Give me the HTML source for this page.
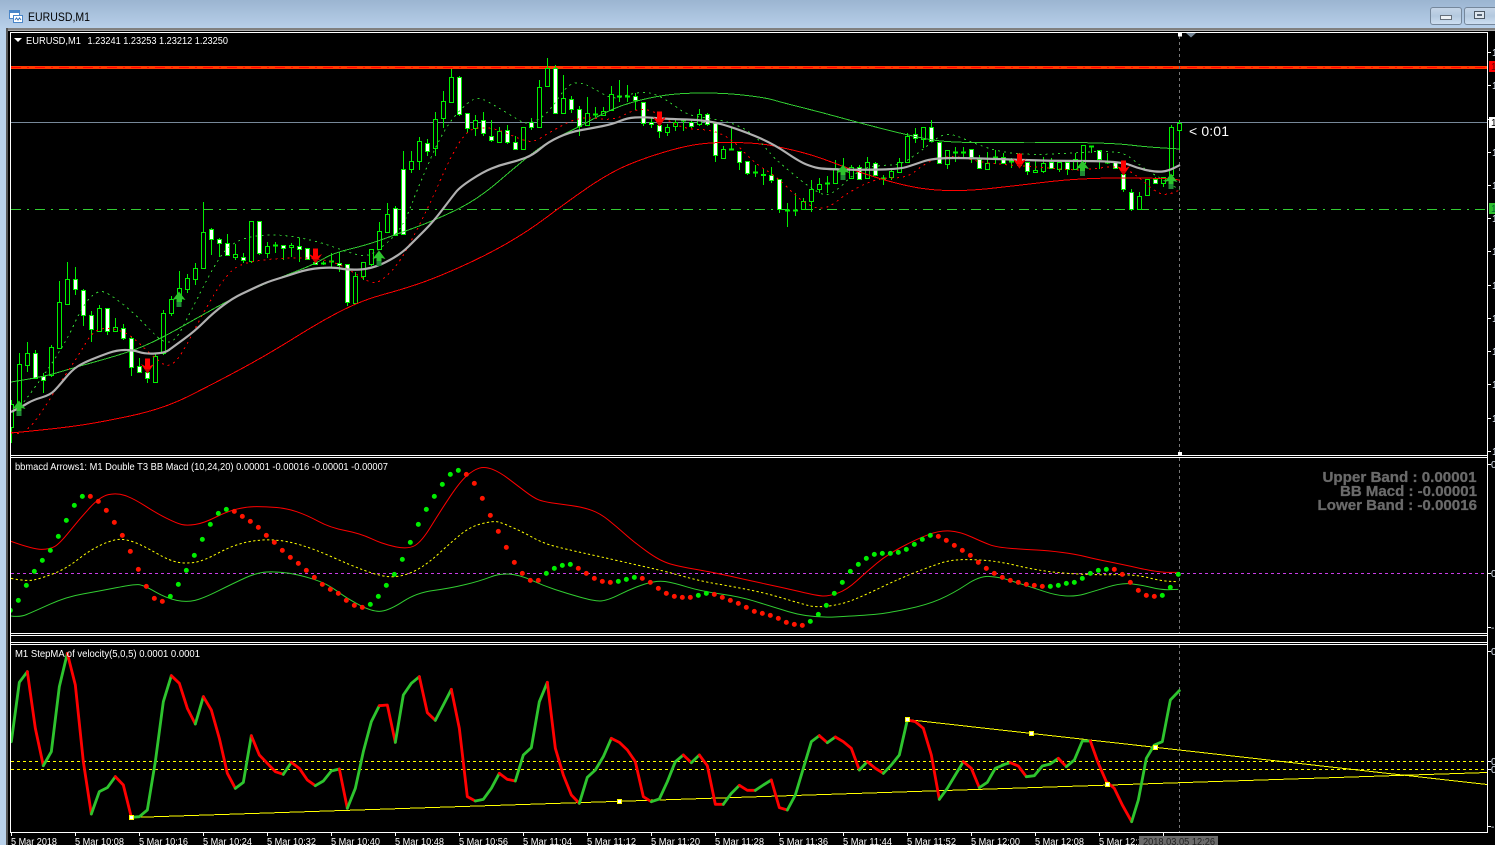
<!DOCTYPE html>
<html><head><meta charset="utf-8"><title>EURUSD,M1</title>
<style>
html,body{margin:0;padding:0;background:#b9d1ea;width:1495px;height:845px;overflow:hidden}
svg{display:block;font-family:"Liberation Sans",sans-serif}
.c{shape-rendering:crispEdges}
.l{fill:none;shape-rendering:crispEdges}
.t{fill:#fff;font-size:10px}
.x{fill:#fff;font-size:10px}
.a{fill:#dfe8f5;font-size:10px}
.gn{fill:none;stroke:#2ec42e;stroke-width:8.5;stroke-linejoin:round;stroke-linecap:round}
.rd{fill:none;stroke:#f00;stroke-width:8.5;stroke-linejoin:round;stroke-linecap:round}
.bd{fill:#6a6a6a;stroke:#6a6a6a;stroke-width:.3;font-size:15px;font-weight:bold}
</style></head><body>
<svg width="1495" height="845" viewBox="0 0 1495 845" xmlns="http://www.w3.org/2000/svg">
<defs>
<linearGradient id="tb" x1="0" y1="0" x2="0" y2="1"><stop offset="0" stop-color="#9bb5d1"/><stop offset="1" stop-color="#b8d0ea"/></linearGradient>
<linearGradient id="bt" x1="0" y1="0" x2="0" y2="1"><stop offset="0" stop-color="#c6d6e8"/><stop offset=".5" stop-color="#b4c9df"/><stop offset="1" stop-color="#cfe0f2"/></linearGradient>
<clipPath id="m"><rect x="11" y="33" width="1476" height="422"/></clipPath>
<clipPath id="s2"><rect x="11" y="458" width="1476" height="175"/></clipPath>
<clipPath id="s3"><rect x="11" y="645" width="1476" height="187"/></clipPath>
<g id="up"><path d="M0-7.500L6.500 1L2.500 0V8H-2.500V0L-6.500 1Z" fill="#2ec42e"/><path d="M-2.500 3H2.500V8H-2.500Z" fill="#1f8a35"/></g>
<g id="dn"><path d="M-2.500-7.500H2.500V0L6.500-2L0 7.500L-6.500-2L-2.500 0Z" fill="#f00"/><path d="M-3 3L0 7.500L3 3Z" fill="#d00000"/></g>
</defs>

<rect x="0" y="0" width="1495" height="845" fill="#b9d1ea"/>
<rect x="0" y="0" width="1495" height="29" fill="url(#tb)"/>
<!-- title icon -->
<rect x="9.500" y="10.500" width="10" height="8" fill="#fff" stroke="#4a86c8"/>
<rect x="10" y="11" width="9" height="2" fill="#4a86c8"/>
<rect x="13.500" y="15.500" width="9" height="7" fill="#fff" stroke="#4a86c8"/>
<path d="M15 20l1.500-2 1.500 2 1.500-2 1.500 2" fill="none" stroke="#3a74b8"/>
<text x="28" y="21" font-size="12" fill="#000" textLength="62" lengthAdjust="spacingAndGlyphs">EURUSD,M1</text>
<!-- window buttons -->
<rect x="1430.500" y="7.500" width="31" height="17" rx="2.500" fill="url(#bt)" stroke="#75879b"/>
<rect x="1440.500" y="15.500" width="11" height="4" fill="#eef2f6" stroke="#66707c"/>
<rect x="1464.500" y="7.500" width="36" height="17" rx="2.500" fill="url(#bt)" stroke="#75879b"/>
<rect x="1474.500" y="11.500" width="10" height="7" fill="#dfe7ef" stroke="#4c5763" stroke-width="1"/>
<rect x="1477" y="14" width="5" height="2" fill="#596675"/>

<!-- frame -->
<rect x="6" y="28" width="1489" height="817" fill="#000"/>
<rect x="6" y="28" width="1489" height="2" fill="#808080"/>
<rect x="6" y="30" width="1489" height="1" fill="#a9a9a9"/>
<rect x="6" y="28" width="2" height="817" fill="#555"/>
<g class="c" fill="#fff">
<rect x="10" y="32" width="1478" height="1"/>
<rect x="10" y="32" width="1" height="801"/>
<rect x="1487" y="32" width="1" height="801"/>
<rect x="10" y="455" width="1478" height="1"/>
<rect x="10" y="457" width="1478" height="1"/>
<rect x="10" y="633" width="1478" height="1"/>
<rect x="10" y="635" width="1478" height="1"/>
<rect x="10" y="642" width="1478" height="1"/>
<rect x="10" y="644" width="1478" height="1"/>
<rect x="10" y="832" width="1478" height="1"/>
</g>

<!-- main chart -->
<g clip-path="url(#m)">
<rect x="11" y="66" width="1476" height="3" fill="#ff3a00"/>
<path d="M11 67.500H1487" stroke="#f00" stroke-width="1" stroke-dasharray="10 6 2 6" class="l"/>
<path d="M11 122.500H1487" stroke="#778899" class="l"/>
<path d="M11 209.500H1487" stroke="#32cd32" stroke-dasharray="10 6 2 6" class="l"/>
<!-- crosshair -->
<path d="M1179.500 36V455" stroke="#777" stroke-dasharray="3 3" class="l"/>

<!-- wicks -->
<path class="l" stroke="#00f000" d="M11.500 400V443M19.500 353V407M27.500 342V372M35.500 350V379M43.500 373V393M51.500 345V377M59.500 281V348M67.500 262V304M75.500 267V295M83.500 289V326M91.500 311V342M99.500 305V332M107.500 308V335M115.500 318V331M123.500 324V340M131.500 336V376M139.500 358V372M147.500 365V383M155.500 354V383M163.500 310V355M171.500 296V316M179.500 271V302M187.500 274V293M195.500 263V285M203.500 202V268M211.500 228V255M219.500 238V257M227.500 234V255M235.500 244V260M243.500 253V263M251.500 221V263M259.500 221V255M267.500 242V258M275.500 242V253M283.500 245V260M291.500 243V257M299.500 238V262M307.500 248V260M315.500 250V264M323.500 261V265M331.500 253V267M339.500 252V272M347.500 264V306M355.500 272V303M363.500 262V280M371.500 249V266M379.500 222V249M387.500 203V232M395.500 206V236M403.500 151V235M411.500 151V173M419.500 137V170M427.500 139V156M435.500 112V156M443.500 91V128M451.500 69V102M459.500 76V116M467.500 113V133M475.500 115V136M483.500 112V136M491.500 120V142M499.500 127V142M507.500 125V144M515.500 136V149M523.500 127V149M531.500 118V130M539.500 80V127M547.500 58V86M555.500 65V113M563.500 75V113M571.500 96V113M579.500 106V136M587.500 97V125M595.500 107V117M603.500 107V115M611.500 86V110M619.500 80V102M627.500 85V102M635.500 93V110M643.500 102V126M651.500 117V128M659.500 125V138M667.500 124V136M675.500 119V131M683.500 120V131M691.500 119V128M699.500 109V126M707.500 113V126M715.500 123V162M723.500 146V158M731.500 128V149M739.500 151V170M747.500 161V175M755.500 165V177M763.500 168V185M771.500 167V183M779.500 179V213M787.500 203V227M795.500 193V216M803.500 198V209M811.500 180V212M819.500 178V193M827.500 176V193M835.500 160V183M843.500 158V180M851.500 165V178M859.500 165V179M867.500 157V178M875.500 162V176M883.500 175V185M891.500 168V180M899.500 158V172M907.500 133V162M915.500 128V143M923.500 127V148M931.500 120V142M939.500 142V163M947.500 150V169M955.500 147V162M963.500 147V157M971.500 149V163M979.500 155V168M987.500 152V169M995.500 150V164M1003.500 153V163M1011.500 158V168M1019.500 153V168M1027.500 162V175M1035.500 160V172M1043.500 157V173M1051.500 158V168M1059.500 162V172M1067.500 162V175M1075.500 153V169M1083.500 145V163M1091.500 146V153M1099.500 150V169M1107.500 153V164M1115.500 162V168M1123.500 174V192M1131.500 189V211M1139.500 192V209M1147.500 179V195M1155.500 177V183M1163.500 177V187M1171.500 125V175M1179.500 120V150"/>
<!-- hollow bodies -->
<path class="c" fill="#000" stroke="#00f000" d="M9.500 404.500h4V427.500h-4zM17.500 364.500h4V403.500h-4zM25.500 353.500h4V365.500h-4zM49.500 347.500h4V375.500h-4zM57.500 302.500h4V348.500h-4zM65.500 279.500h4V304.500h-4zM97.500 308.500h4V331.500h-4zM113.500 327.500h4V331.500h-4zM153.500 356.500h4V382.500h-4zM161.500 313.500h4V353.500h-4zM169.500 299.500h4V313.500h-4zM177.500 288.500h4V301.500h-4zM185.500 278.500h4V289.500h-4zM193.500 268.500h4V279.500h-4zM201.500 232.500h4V268.500h-4zM233.500 254.500h4V257.500h-4zM249.500 221.500h4V261.500h-4zM265.500 246.500h4V253.500h-4zM289.500 245.500h4V247.500h-4zM353.500 276.500h4V303.500h-4zM361.500 262.500h4V276.500h-4zM369.500 249.500h4V264.500h-4zM377.500 231.500h4V249.500h-4zM385.500 214.500h4V232.500h-4zM409.500 161.500h4V169.500h-4zM417.500 141.500h4V161.500h-4zM433.500 119.500h4V148.500h-4zM441.500 101.500h4V118.500h-4zM449.500 77.500h4V102.500h-4zM473.500 120.500h4V128.500h-4zM497.500 131.500h4V142.500h-4zM521.500 127.500h4V149.500h-4zM537.500 87.500h4V127.500h-4zM545.500 68.500h4V86.500h-4zM561.500 98.500h4V113.500h-4zM585.500 113.500h4V125.500h-4zM601.500 111.500h4V115.500h-4zM609.500 94.500h4V110.500h-4zM665.500 127.500h4V132.500h-4zM673.500 122.500h4V126.500h-4zM697.500 114.500h4V124.500h-4zM721.500 149.500h4V158.500h-4zM801.500 201.500h4V209.500h-4zM809.500 189.500h4V201.500h-4zM817.500 184.500h4V189.500h-4zM833.500 168.500h4V183.500h-4zM849.500 167.500h4V178.500h-4zM865.500 162.500h4V178.500h-4zM889.500 171.500h4V177.500h-4zM897.500 162.500h4V172.500h-4zM905.500 136.500h4V162.500h-4zM921.500 127.500h4V139.500h-4zM945.500 150.500h4V164.500h-4zM985.500 163.500h4V169.500h-4zM1017.500 160.500h4V165.500h-4zM1033.500 170.500h4V172.500h-4zM1041.500 163.500h4V171.500h-4zM1057.500 162.500h4V169.500h-4zM1073.500 159.500h4V169.500h-4zM1081.500 145.500h4V163.500h-4zM1137.500 196.500h4V209.500h-4zM1145.500 179.500h4V195.500h-4zM1161.500 177.500h4V183.500h-4zM1169.500 127.500h4V175.500h-4zM1177.500 123.500h4V130.500h-4z"/>
<!-- white bodies -->
<path class="c" fill="#fff" stroke="#00f000" d="M33.500 353.500h4V378.500h-4zM41.500 376.500h4V380.500h-4zM73.500 279.500h4V289.500h-4zM81.500 290.500h4V315.500h-4zM89.500 315.500h4V329.500h-4zM105.500 308.500h4V331.500h-4zM121.500 328.500h4V338.500h-4zM129.500 338.500h4V367.500h-4zM137.500 366.500h4V372.500h-4zM145.500 372.500h4V378.500h-4zM209.500 229.500h4V239.500h-4zM217.500 239.500h4V243.500h-4zM225.500 243.500h4V255.500h-4zM241.500 257.500h4V260.500h-4zM257.500 221.500h4V253.500h-4zM281.500 245.500h4V248.500h-4zM297.500 246.500h4V249.500h-4zM305.500 248.500h4V259.500h-4zM313.500 262.500h4V264.500h-4zM337.500 263.500h4V265.500h-4zM345.500 264.500h4V302.500h-4zM393.500 208.500h4V235.500h-4zM401.500 169.500h4V234.500h-4zM425.500 143.500h4V151.500h-4zM457.500 77.500h4V114.500h-4zM465.500 113.500h4V128.500h-4zM481.500 120.500h4V133.500h-4zM489.500 136.500h4V140.500h-4zM505.500 130.500h4V142.500h-4zM513.500 142.500h4V149.500h-4zM529.500 122.500h4V127.500h-4zM553.500 68.500h4V113.500h-4zM569.500 99.500h4V109.500h-4zM577.500 109.500h4V126.500h-4zM633.500 96.500h4V100.500h-4zM641.500 102.500h4V123.500h-4zM649.500 122.500h4V124.500h-4zM657.500 125.500h4V131.500h-4zM689.500 122.500h4V126.500h-4zM705.500 114.500h4V124.500h-4zM713.500 123.500h4V155.500h-4zM737.500 151.500h4V162.500h-4zM745.500 161.500h4V173.500h-4zM761.500 174.500h4V175.500h-4zM769.500 175.500h4V180.500h-4zM777.500 179.500h4V209.500h-4zM857.500 167.500h4V179.500h-4zM873.500 163.500h4V175.500h-4zM913.500 134.500h4V138.500h-4zM929.500 127.500h4V141.500h-4zM937.500 142.500h4V163.500h-4zM969.500 149.500h4V157.500h-4zM977.500 159.500h4V168.500h-4zM1001.500 157.500h4V163.500h-4zM1025.500 162.500h4V171.500h-4zM1049.500 162.500h4V168.500h-4zM1065.500 162.500h4V169.500h-4zM1097.500 150.500h4V159.500h-4zM1113.500 162.500h4V168.500h-4zM1121.500 174.500h4V189.500h-4zM1129.500 192.500h4V209.500h-4zM1153.500 179.500h4V183.500h-4z"/>
<!-- doji bars -->
<path class="c" stroke="#00f000" stroke-width="2" d="M273 245.500h5M321 263.500h5M329 261.500h5M593 114.500h5M617 96.500h5M625 96.500h5M681 120.500h5M729 149.500h5M753 172.500h5M785 210.500h5M793 210.500h5M825 183.500h5M841 170.500h5M881 178.500h5M953 152.500h5M961 152.500h5M993 157.500h5M1009 161.500h5M1089 146.500h5M1105 162.500h5"/>

<!-- long red MA -->
<polyline class="l s" stroke="#f00" points="11,433 53,429 97,423 163,409 213,384 267,355 323,320 363,300 400,290 433,279 483,257 527,232 567,202 603,177 633,162 680,147 713,142 757,143 780,147 813,155 847,168 890,182 927,190 967,191 1013,186 1080,178 1160,178 1180,180"/>
<!-- long green MA -->
<polyline class="l s" stroke="#32cd32" points="11,382 43,377 73,368 130,352 160,339 197,318 233,298 273,280 313,265 333,253 367,245 400,233 433,221 477,200 520,163 547,142 577,128 613,108 647,98 680,93 727,93 767,98 780,102 820,112 860,123 907,135 947,143 1033,142 1113,143 1147,147 1180,149"/>
<!-- dashed green -->
<polyline class="l s" stroke="#32cd32" stroke-dasharray="2 4" points="20,407 43,377 67,340 83,305 97,291 107,292 133,312 153,333 163,342 175,342 190,313 217,260 233,242 257,235 287,235 320,242 350,253 367,257 383,247 403,227 417,190 443,130 467,102 480,97 497,107 517,119 527,125 547,115 567,85 580,82 593,88 613,100 633,93 650,92 667,100 687,115 707,118 730,122 753,133 773,157 780,163 800,180 817,192 830,197 860,168 885,165 900,165 920,152 940,135 953,134 973,143 1000,152 1033,155 1073,153 1105,151 1125,153 1142,167 1155,175 1180,190"/>
<!-- dashed red -->
<polyline class="l s" stroke="#f00" stroke-dasharray="2 4" points="11,432 18,435 30,428 43,410 60,383 80,353 92,332 107,327 128,333 143,347 160,362 168,367 180,358 203,313 227,273 247,261 300,257 333,261 353,272 372,284 383,280 400,262 417,230 433,197 450,158 467,130 483,127 500,130 517,138 533,143 550,132 580,116 613,121 633,110 650,109 670,122 687,129 713,130 733,140 753,162 777,177 800,200 817,209 830,207 847,193 877,178 907,178 923,165 937,158 957,156 980,162 1007,165 1040,167 1080,171 1120,165 1140,178 1157,193 1167,195 1180,190"/>
<!-- gray MA -->
<polyline class="s" fill="none" stroke="#b0b0b0" stroke-width="2.200" points="11,412 23,406 33,400 50,395 58,387 72,370 83,363 100,356 117,350 133,350 145,354 165,353 173,347 195,331 213,313 233,298 250,290 267,282 287,276 308,269 333,267 348,270 372,269 400,255 417,238 433,222 452,197 460,187 483,172 500,165 517,161 533,155 548,142 570,132 593,128 613,124 627,118 643,117 667,119 707,120 738,129 772,143 800,162 813,167 823,169 863,170 900,169 913,165 933,158 973,158 1047,161 1120,161 1140,169 1157,172 1168,171 1180,165"/>
<!-- arrows -->
<use href="#up" x="19" y="408"/><use href="#up" x="179" y="299"/><use href="#up" x="379" y="258"/><use href="#up" x="843" y="172"/><use href="#up" x="1082.500" y="168"/><use href="#up" x="1171" y="181"/>
<use href="#dn" x="147.500" y="366"/><use href="#dn" x="315.500" y="256"/><use href="#dn" x="659.500" y="119"/><use href="#dn" x="1019.500" y="161"/><use href="#dn" x="1123.500" y="168"/>
<rect x="1178" y="33" width="4" height="3.500" fill="#fff"/>
<path d="M1186 33h10l-5 4.500z" fill="#778899"/>
<path d="M14 38h8l-4 4z" fill="#fff"/>
<text class="t" x="26" y="44" textLength="55" lengthAdjust="spacingAndGlyphs">EURUSD,M1</text>
<text class="t" x="87.500" y="44" textLength="140.500" lengthAdjust="spacingAndGlyphs">1.23241 1.23253 1.23212 1.23250</text>
<text x="1189" y="136" font-size="14" fill="#fff" textLength="40">&lt; 0:01</text>
</g>
<rect x="1178" y="452" width="4" height="3" fill="#fff"/>

<!-- subwindow 2 -->
<g clip-path="url(#s2)">
<path d="M11 573.500H1487" stroke="#c93ce6" stroke-dasharray="3 3" class="l"/>
<path d="M1179.500 458V633" stroke="#777" stroke-dasharray="3 3" class="l"/>
<g transform="translate(0 455) scale(.33333)">
<polyline class="s" fill="none" stroke="#f00" stroke-width="3" points="33,259 100,283 150,283 180,265 240,190 300,125 350,113 400,130 470,175 530,205 560,212 610,205 680,170 740,155 800,155 860,160 920,180 990,218 1080,235 1150,268 1225,283 1265,260 1320,170 1380,80 1420,45 1455,34 1500,52 1550,90 1600,128 1630,140 1680,147 1750,157 1800,175 1850,215 1900,260 1980,318 2040,335 2140,352 2240,375 2350,398 2450,422 2485,424 2540,405 2600,350 2660,300 2750,252 2820,226 2880,230 2950,262 2990,277 3075,283 3145,287 3225,297 3285,312 3365,328 3475,352 3535,352"/>
<polyline class="s" fill="none" stroke="#ff0" stroke-width="3" stroke-dasharray="7 7" points="33,370 80,380 130,368 200,340 270,285 340,253 380,253 430,272 510,318 560,326 610,318 700,270 780,253 860,257 950,285 1050,330 1130,360 1185,368 1240,352 1290,320 1350,265 1410,215 1480,197 1510,205 1570,232 1630,265 1700,283 1800,305 1920,332 2000,350 2100,378 2200,395 2300,415 2400,445 2450,458 2530,447 2600,418 2700,370 2790,335 2850,315 2920,313 3000,320 3085,340 3165,353 3285,360 3405,358 3485,378 3535,380"/>
<polyline class="s" fill="none" stroke="#32cd32" stroke-width="3" points="33,483 60,487 100,470 200,425 300,408 400,388 430,390 500,430 560,442 610,430 700,385 770,353 830,349 900,360 980,385 1040,430 1120,472 1170,465 1250,413 1350,400 1440,378 1500,355 1560,360 1630,392 1700,415 1780,438 1820,438 1900,398 1970,376 2020,383 2100,408 2220,425 2300,450 2430,490 2590,481 2660,475 2780,450 2860,415 2940,362 3000,367 3035,378 3105,400 3165,420 3225,425 3285,408 3365,383 3425,390 3485,405 3535,403"/>
<path stroke="#ff1400" stroke-width="15" stroke-linecap="round" fill="none" d="M271 124h0M295 139h0M319 166h0M343 202h0M367 241h0M391 289h0M415 343h0M439 394h0M463 430h0M487 439h0M703 169h0M727 184h0M751 199h0M775 217h0M799 241h0M823 262h0M847 286h0M871 307h0M895 325h0M919 346h0M943 367h0M967 388h0M991 403h0M1015 415h0M1039 436h0M1063 451h0M1087 457h0M1399 58h0M1423 85h0M1447 130h0M1471 181h0M1495 229h0M1519 277h0M1543 322h0M1567 355h0M1591 376h0M1615 376h0M1735 340h0M1759 355h0M1783 370h0M1807 379h0M1831 382h0M1927 370h0M1951 382h0M1975 400h0M1999 415h0M2023 424h0M2047 427h0M2071 427h0M2143 418h0M2167 427h0M2191 436h0M2215 445h0M2239 457h0M2263 469h0M2287 475h0M2311 481h0M2335 490h0M2359 502h0M2383 508h0M2407 511h0M2815 244h0M2839 256h0M2863 271h0M2887 286h0M2911 301h0M2935 322h0M2959 340h0M2983 355h0M3007 367h0M3031 376h0M3055 382h0M3079 388h0M3103 391h0M3127 394h0M3343 343h0M3367 358h0M3391 382h0M3415 406h0M3439 421h0M3463 424h0"/>
<path stroke="#00ee00" stroke-width="15" stroke-linecap="round" fill="none" d="M31 466h0M55 436h0M79 391h0M103 349h0M127 316h0M151 286h0M175 244h0M199 196h0M223 151h0M247 124h0M511 424h0M535 388h0M559 346h0M583 301h0M607 253h0M631 208h0M655 175h0M679 163h0M1111 448h0M1135 424h0M1159 391h0M1183 358h0M1207 313h0M1231 262h0M1255 208h0M1279 163h0M1303 124h0M1327 88h0M1351 58h0M1375 46h0M1639 355h0M1663 340h0M1687 331h0M1711 328h0M1855 379h0M1879 373h0M1903 367h0M2095 421h0M2119 415h0M2431 499h0M2455 478h0M2479 451h0M2503 415h0M2527 382h0M2551 349h0M2575 328h0M2599 310h0M2623 298h0M2647 295h0M2671 295h0M2695 292h0M2719 283h0M2743 268h0M2767 253h0M2791 241h0M3151 394h0M3175 391h0M3199 385h0M3223 382h0M3247 370h0M3271 355h0M3295 346h0M3319 343h0M3487 421h0M3511 397h0M3535 358h0"/>
</g>
<text class="t" x="15" y="470" textLength="373" lengthAdjust="spacingAndGlyphs">bbmacd Arrows1: M1 Double T3 BB Macd (10,24,20) 0.00001 -0.00016 -0.00001 -0.00007</text>
<text class="bd" x="1322.500" y="482" textLength="154" lengthAdjust="spacingAndGlyphs">Upper Band : 0.00001</text>
<text class="bd" x="1340" y="496" textLength="137" lengthAdjust="spacingAndGlyphs">BB Macd : -0.00001</text>
<text class="bd" x="1317.500" y="510" textLength="159.500" lengthAdjust="spacingAndGlyphs">Lower Band : -0.00016</text>
</g>

<!-- subwindow 3 -->
<g clip-path="url(#s3)">
<path d="M1179.500 645V832" stroke="#777" stroke-dasharray="3 3" class="l"/>
<path d="M11 761.500H1487M11 769.500H1487" stroke="#ff0" stroke-dasharray="3 3" class="l"/>
<path d="M131.500 817.500L1487 772.500M907 719.500L1487 784.500" stroke="#ff0" class="l"/>
<g transform="translate(0 645) scale(.33333)">
<polyline class="gn" points="34,290 58,112 82,80"/><polyline class="rd" points="82,80 106,250 130,362"/>
<polyline class="gn" points="130,362 154,320 178,125 202,25"/><polyline class="rd" points="202,25 226,120 250,350 274,507"/>
<polyline class="gn" points="274,507 298,440 322,428 346,395"/><polyline class="rd" points="346,395 370,420 394,517"/>
<polyline class="gn" points="394,517 418,515 442,495 466,350 490,170 514,92"/><polyline class="rd" points="514,92 538,115 562,190 586,237"/>
<polyline class="gn" points="586,237 610,155"/><polyline class="rd" points="610,155 634,195 658,280 682,385 706,430"/>
<polyline class="gn" points="706,430 730,412 754,272"/><polyline class="rd" points="754,272 778,330 802,355 826,380 850,388"/>
<polyline class="gn" points="850,388 874,352"/><polyline class="rd" points="874,352 898,370 922,405 946,422"/>
<polyline class="gn" points="946,422 970,408 994,378 1018,372"/><polyline class="rd" points="1018,372 1042,490"/>
<polyline class="gn" points="1042,490 1066,430 1090,320 1114,230 1138,182"/><polyline class="rd" points="1138,182 1162,180 1186,292"/>
<polyline class="gn" points="1186,292 1210,150 1234,115 1258,95"/><polyline class="rd" points="1258,95 1282,203 1306,226"/>
<polyline class="gn" points="1306,226 1330,180 1354,133"/><polyline class="rd" points="1354,133 1378,250 1402,455 1426,468"/>
<polyline class="gn" points="1426,468 1450,463 1474,430 1498,385"/>
</g>
<g transform="translate(500 645) scale(.33333)">
<polyline class="rd" points="-2,385 22,403 46,408"/><polyline class="gn" points="46,408 70,330 94,308 118,170 142,112"/>
<polyline class="rd" points="142,112 166,310 190,390 214,450 238,475"/><polyline class="gn" points="238,475 262,397 286,375 310,335 334,280"/>
<polyline class="rd" points="334,280 358,292 382,315 406,350 430,455 454,470"/><polyline class="gn" points="454,470 478,462 502,410 526,350 550,330"/>
<polyline class="rd" points="550,330 574,353"/><polyline class="gn" points="574,353 598,330"/>
<polyline class="rd" points="598,330 622,362 646,478 670,478"/><polyline class="gn" points="670,478 694,445 718,421"/>
<polyline class="rd" points="718,421 742,436 766,436"/><polyline class="gn" points="766,436 790,420 814,405"/>
<polyline class="rd" points="814,405 838,488 862,495"/><polyline class="gn" points="862,495 886,450 910,370 934,290 958,272"/>
<polyline class="rd" points="958,272 982,293"/><polyline class="gn" points="982,293 1006,276"/>
<polyline class="rd" points="1006,276 1030,290 1054,310 1078,375"/><polyline class="gn" points="1078,375 1102,350"/>
<polyline class="rd" points="1102,350 1126,370 1150,385"/><polyline class="gn" points="1150,385 1174,360 1198,330 1222,225"/>
<polyline class="rd" points="1222,225 1246,230 1270,250 1294,330 1318,463"/><polyline class="gn" points="1318,463 1342,430 1366,390 1390,350"/>
<polyline class="rd" points="1390,350 1414,370 1438,428"/><polyline class="gn" points="1438,428 1462,412 1486,370 1510,360"/>
</g>
<g transform="translate(995 645) scale(.33333)">
<polyline class="gn" points="22,360 46,353"/><polyline class="rd" points="46,353 70,363 94,395"/>
<polyline class="gn" points="94,395 118,392 142,363 166,357 190,340"/><polyline class="rd" points="190,340 214,365"/>
<polyline class="gn" points="214,365 238,345 262,288 286,288"/><polyline class="rd" points="286,288 310,355 334,410 358,430 382,480 410,530"/>
<polyline class="gn" points="410,530 430,465 454,340 478,300 502,290 526,165 553,137"/>
</g>
<g fill="#fff" stroke="#ff0" class="c">
<rect x="129.500" y="815.500" width="4" height="4"/>
<rect x="617.500" y="799.500" width="4" height="4"/>
<rect x="1105.500" y="782.500" width="4" height="4"/>
<rect x="905.500" y="717.500" width="4" height="4"/>
<rect x="1029.500" y="731.500" width="4" height="4"/>
<rect x="1153.500" y="745.500" width="4" height="4"/>
</g>
<text class="t" x="15" y="657" textLength="185" lengthAdjust="spacingAndGlyphs">M1 StepMA of velocity(5,0,5) 0.0001 0.0001</text>
</g>

<!-- price axis -->
<path class="c" stroke="#fff" d="M1488 52.500h3M1488 85.500h3M1488 119.500h3M1488 152.500h3M1488 185.500h3M1488 218.500h3M1488 251.500h3M1488 285.500h3M1488 318.500h3M1488 351.500h3M1488 384.500h3M1488 418.500h3M1488 451.500h3M1488 464.500h3M1488 573.500h3M1488 627.500h3M1488 651.500h3M1488 761.500h3M1488 769.500h3M1488 826.500h3"/>
<g class="a">
<text x="1492" y="56">1</text><text x="1492" y="89">1</text><text x="1492" y="156">1</text><text x="1492" y="189">1</text><text x="1492" y="222">1</text><text x="1492" y="255">1</text><text x="1492" y="289">1</text><text x="1492" y="322">1</text><text x="1492" y="355">1</text><text x="1492" y="388">1</text><text x="1492" y="422">1</text><text x="1492" y="455">1</text>
<text x="1491" y="468">0</text><text x="1491" y="577">0</text><text x="1491" y="631">-</text><text x="1491" y="655">0</text><text x="1491" y="765">0</text><text x="1491" y="773">0</text><text x="1491" y="830">-</text>
</g>
<rect x="1489" y="61" width="6" height="11" fill="#f00"/>
<rect x="1489" y="117" width="6" height="11" fill="#fff"/>
<rect x="1489" y="203" width="6" height="11" fill="#2fbf2f"/>
<text x="1491" y="70" font-size="10" fill="#600">1</text>
<text x="1491" y="126" font-size="10" fill="#000">1</text>
<text x="1491" y="212" font-size="10" fill="#063">1</text>

<!-- time axis -->
<path class="c" stroke="#fff" d="M11.500 832v4M75.500 832v4M139.500 832v4M203.500 832v4M267.500 832v4M331.500 832v4M395.500 832v4M459.500 832v4M523.500 832v4M587.500 832v4M651.500 832v4M715.500 832v4M779.500 832v4M843.500 832v4M907.500 832v4M971.500 832v4M1035.500 832v4M1099.500 832v4M1163.500 832v4"/>
<g class="x">
<text x="11" y="845" textLength="46" lengthAdjust="spacingAndGlyphs">5 Mar 2018</text>
<text x="75" y="845" textLength="49" lengthAdjust="spacingAndGlyphs">5 Mar 10:08</text>
<text x="139" y="845" textLength="49" lengthAdjust="spacingAndGlyphs">5 Mar 10:16</text>
<text x="203" y="845" textLength="49" lengthAdjust="spacingAndGlyphs">5 Mar 10:24</text>
<text x="267" y="845" textLength="49" lengthAdjust="spacingAndGlyphs">5 Mar 10:32</text>
<text x="331" y="845" textLength="49" lengthAdjust="spacingAndGlyphs">5 Mar 10:40</text>
<text x="395" y="845" textLength="49" lengthAdjust="spacingAndGlyphs">5 Mar 10:48</text>
<text x="459" y="845" textLength="49" lengthAdjust="spacingAndGlyphs">5 Mar 10:56</text>
<text x="523" y="845" textLength="49" lengthAdjust="spacingAndGlyphs">5 Mar 11:04</text>
<text x="587" y="845" textLength="49" lengthAdjust="spacingAndGlyphs">5 Mar 11:12</text>
<text x="651" y="845" textLength="49" lengthAdjust="spacingAndGlyphs">5 Mar 11:20</text>
<text x="715" y="845" textLength="49" lengthAdjust="spacingAndGlyphs">5 Mar 11:28</text>
<text x="779" y="845" textLength="49" lengthAdjust="spacingAndGlyphs">5 Mar 11:36</text>
<text x="843" y="845" textLength="49" lengthAdjust="spacingAndGlyphs">5 Mar 11:44</text>
<text x="907" y="845" textLength="49" lengthAdjust="spacingAndGlyphs">5 Mar 11:52</text>
<text x="971" y="845" textLength="49" lengthAdjust="spacingAndGlyphs">5 Mar 12:00</text>
<text x="1035" y="845" textLength="49" lengthAdjust="spacingAndGlyphs">5 Mar 12:08</text>
<text x="1099" y="845" textLength="49" lengthAdjust="spacingAndGlyphs">5 Mar 12:16</text>
</g>
<rect x="1139" y="836" width="79" height="9" fill="#6b6b6b"/>
<text x="1143" y="845" font-size="10" fill="#222" textLength="72" lengthAdjust="spacingAndGlyphs">2018.03.05 12:26</text>
</svg>
<script>
document.querySelectorAll('polyline.s').forEach(function(p){
  var a=p.getAttribute('points').trim().split(/\s+/).map(function(s){return s.split(',').map(Number)});
  var d='M'+a[0][0]+' '+a[0][1];
  for(var i=1;i<a.length-1;i++){
    var mx=(a[i][0]+a[i+1][0])/2,my=(a[i][1]+a[i+1][1])/2;
    d+='Q'+a[i][0]+' '+a[i][1]+' '+mx+' '+my;
  }
  var l=a[a.length-1];d+='L'+l[0]+' '+l[1];
  var n=document.createElementNS('http://www.w3.org/2000/svg','path');
  for(var j=0;j<p.attributes.length;j++){var at=p.attributes[j];if(at.name!=='points')n.setAttribute(at.name,at.value)}
  n.setAttribute('d',d);
  p.parentNode.replaceChild(n,p);
});
</script>
</body></html>
